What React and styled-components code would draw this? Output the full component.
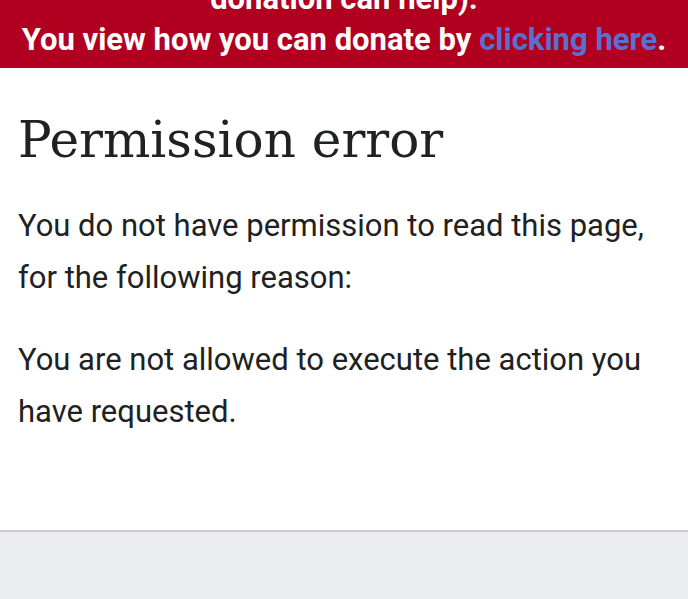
import React from "react"
import styled, { createGlobalStyle } from "styled-components"

const GlobalStyle = createGlobalStyle`
  html, body {
    margin: 0;
    padding: 0;
    background: #fff;
  }
  body {
    font-family: Roboto, "Liberation Sans", sans-serif;
    color: #202122;
  }
`

const Page = styled.div`
  width: 688px;
  height: 599px;
  display: flex;
  flex-direction: column;
  overflow: hidden;
`

const Banner = styled.div`
  height: 68px;
  background: #b1001f;
  color: #fff;
  font-weight: 700;
  font-size: 31px;
  line-height: 41px;
  text-align: center;
  display: flex;
  flex-direction: column;
  justify-content: flex-end;
  padding-bottom: 8px;
  box-sizing: border-box;
  overflow: hidden;
`

const BannerLine = styled.div`
  white-space: nowrap;
`

const BannerLink = styled.a`
  color: #5b6fd0;
  text-decoration: none;
`

const Content = styled.main`
  flex: 1;
  padding: 40px 18px 0;
`

const Heading = styled.h1`
  margin: 0 0 28px;
  font-family: "DejaVu Serif", "Liberation Serif", serif;
  font-weight: 400;
  font-size: 50px;
  line-height: 64px;
  color: #202122;
`

const Para = styled.p`
  margin: 0 0 30px;
  font-size: 31px;
  line-height: 52px;
  color: #202122;
`

const Footer = styled.footer`
  height: 67px;
  background: #eaecf0;
  border-top: 2px solid #c8ccd1;
`

export default function App() {
  return (
    <>
      <GlobalStyle />
      <Page>
        <Banner>
          <BannerLine>donation can help).</BannerLine>
          <BannerLine>
            You view how you can donate by{" "}
            <BannerLink href="#">clicking here</BannerLink>.
          </BannerLine>
        </Banner>
        <Content>
          <Heading>Permission error</Heading>
          <Para>
            You do not have permission to read this page, for the following
            reason:
          </Para>
          <Para>You are not allowed to execute the action you have requested.</Para>
        </Content>
        <Footer />
      </Page>
    </>
  )
}
